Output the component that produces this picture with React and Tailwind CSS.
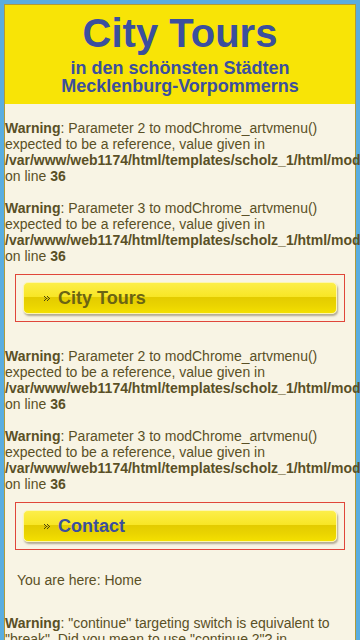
import React from "react";

// Small dotted double-chevron used in the menu buttons
function Arrow() {
  return (
    <svg width="7" height="5" viewBox="0 0 7 5" className="shrink-0" shapeRendering="crispEdges">
      {[
        [0, 0], [3, 0],
        [1, 1], [4, 1],
        [2, 2], [5, 2],
        [1, 3], [4, 3],
        [0, 4], [3, 4],
      ].map(([x, y], i) => (
        <rect key={i} x={x} y={y} width="1" height="1" fill="#4a4510" />
      ))}
      <rect x="0" y="2" width="1" height="1" fill="#a89a20" />
      <rect x="3" y="2" width="1" height="1" fill="#a89a20" />
    </svg>
  );
}

function Warning({ param }) {
  return (
    <p className="whitespace-nowrap">
      <b>Warning</b>: Parameter {param} to modChrome_artvmenu()
      <br />
      expected to be a reference, value given in
      <br />
      <b>/var/www/web1174/html/templates/scholz_1/html/modules.php</b>
      <br />
      on line <b>36</b>
    </p>
  );
}

function MenuButton({ label, active }) {
  return (
    <div className="mx-[10px] border border-[#e0463a] p-[7px]">
      <a
        href="#"
        className="flex h-[32px] items-center gap-[7px] rounded-[5px] border border-[#fdf6b0] bg-[linear-gradient(to_bottom,#fcee4a_0%,#f8e626_45%,#e3cb00_46%,#ead400_75%,#f4e000_100%)] pl-[20px] shadow-[1px_2px_2px_rgba(120,110,80,0.55)]"
      >
        <Arrow />
        <span
          className={`text-[18px] font-bold leading-none ${active ? "text-[#3b4f9e]" : "text-[#6b6414]"}`}
        >
          {label}
        </span>
      </a>
    </div>
  );
}

export default function App() {
  return (
    <div className="min-h-[640px] w-[360px] overflow-hidden bg-[#5aade0] pt-[4px] font-['Liberation_Sans',Arial,sans-serif]">
      <div className="mx-[4px] border border-[#b09a3a] bg-[#f8f4e4]">
        {/* Header */}
        <div className="bg-[#f8e406] pb-[9px] pt-[6px] text-center font-bold text-[#3b4f9e]">
          <h1 className="text-[40px] leading-[45px]">City Tours</h1>
          <h2 className="mt-[3px] text-[18px] leading-[18px]">
            in den schönsten Städten
            <br />
            Mecklenburg-Vorpommerns
          </h2>
        </div>

        {/* Content */}
        <div className="pt-[16px] text-[14px] leading-[16px] text-[#5a5026]">
          <Warning param={2} />
          <div className="h-[16px]" />
          <Warning param={3} />
          <div className="mt-[10px]">
            <MenuButton label="City Tours" />
          </div>
          <div className="h-[26px]" />
          <Warning param={2} />
          <div className="h-[16px]" />
          <Warning param={3} />
          <div className="mt-[10px]">
            <MenuButton label="Contact" active />
          </div>

          <div className="pl-[12px] pt-[22px]">You are here: Home</div>

          <p className="mt-[27px]">
            <b>Warning</b>: "continue" targeting switch is equivalent to "break". Did you mean to use
            "continue 2"? in <b className="whitespace-nowrap">/var/www/web1174/html/libraries/joomla/filter/input.php</b> on
            line <b>652</b>
          </p>
          <div className="h-[16px]" />
        </div>
      </div>
    </div>
  );
}
